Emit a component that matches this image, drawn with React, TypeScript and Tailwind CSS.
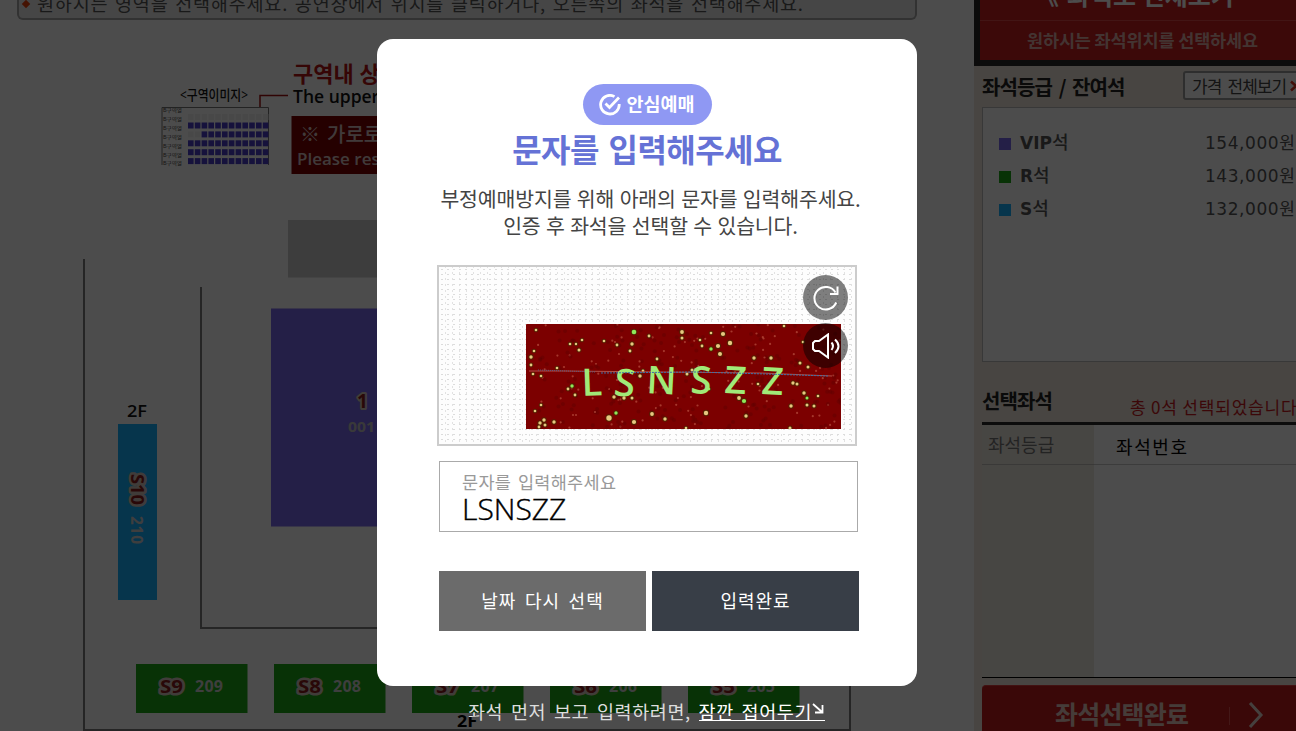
import { ReactNode } from 'react';

interface Grade {
  name: string;
  price: string;
  color: string;
}

const grades: Grade[] = [
  { name: 'VIP', price: '154,000', color: 'bg-[#7b68ee]' },
  { name: 'R', price: '143,000', color: 'bg-[#1ca814]' },
  { name: 'S', price: '132,000', color: 'bg-[#17b3ff]' },
];

const blocks = [
  { x: 136, label: 'S9', no: '209' },
  { x: 274, label: 'S8', no: '208' },
  { x: 412, label: 'S7', no: '207' },
  { x: 550, label: 'S6', no: '206' },
  { x: 688, label: 'S5', no: '205' },
];

const letters = [
  { char: 'L', x: 56, y: 72, rotate: -2 },
  { char: 'S', x: 87, y: 71, rotate: 6 },
  { char: 'N', x: 120, y: 69, rotate: 3 },
  { char: 'S', x: 164, y: 69, rotate: 3 },
  { char: 'Z', x: 198, y: 69, rotate: 3 },
  { char: 'Z', x: 235, y: 70, rotate: 3 },
];

// bright specks: x, y, radius
const specks = [
  [10, 6, 1.6], [44, 20, 1.6], [50, 20, 1.5], [56, 16, 1.6], [53, 26, 1.8], [78, 17, 1.6],
  [91, 21, 1.7], [106, 20, 2], [104, 27, 1.7], [108, 8, 2.6], [123, 12, 1.7], [156, 8, 2.2],
  [156, 14, 1.8], [174, 16, 1.6], [176, 22, 1.7], [185, 9, 1.6], [197, 10, 2.4], [204, 19, 2.5],
  [192, 22, 2.4], [185, 25, 2], [194, 30, 2.3], [258, 2, 1.6], [277, 18, 1.6], [8, 27, 1.6],
  [5, 33, 2], [5, 41, 1.7], [7, 50, 1.6], [31, 44, 1.6], [15, 52, 1.6], [46, 62, 2],
  [42, 65, 1.7], [49, 71, 1.7], [15, 81, 1.6], [9, 87, 1.6], [18, 96, 2], [28, 98, 2],
  [14, 99, 2], [19, 101, 1.8], [13, 103, 1.7], [90, 89, 2], [83, 94, 3], [88, 73, 2],
  [98, 74, 2], [106, 74, 1.8], [126, 90, 2.2], [108, 98, 2.4], [139, 95, 2], [180, 89, 2.5],
  [213, 74, 2.2], [218, 77, 2.4], [220, 92, 2], [232, 60, 1.6], [228, 34, 2], [131, 35, 1.7],
  [245, 34, 2], [267, 59, 2], [274, 39, 1.8], [282, 43, 1.8], [278, 69, 2], [281, 74, 1.8],
  [265, 82, 2], [281, 81, 1.8], [288, 82, 1.8], [264, 104, 1.8], [292, 72, 1.6], [114, 52, 2],
  [117, 47, 1.7], [161, 50, 1.8], [166, 46, 1.8], [183, 65, 1.6], [271, 60, 1.8], [160, 104, 1.6],
];

// dim noise under the bright specks
const noise = [...Array(330)].map((_, i) => ({
  x: (i * 73.7 + ((i * i * 13) % 47)) % 315,
  y: (i * 41.3 + ((i * i * 7) % 31)) % 105,
  pink: i % 3 === 0,
}));

const Captcha = () => (
  <svg width="315" height="105" viewBox="0 0 315 105" className="block">
    <rect width="315" height="105" fill="#7c0000" />
    {noise.map((n, i) => (
      <circle
        key={i}
        cx={n.x}
        cy={n.y}
        r={n.pink ? 1.1 : 2}
        fill={n.pink ? '#b85040' : '#5c0000'}
        opacity={n.pink ? 0.7 : 0.4}
      />
    ))}
    {specks.map(([x, y, r], i) => (
      <g key={i}>
        <circle cx={x} cy={y} r={r + 0.7} fill="#4a2800" opacity="0.8" />
        <circle cx={x} cy={y} r={r - 0.3} fill={i % 10 === 9 ? '#8fe85a' : '#e6c880'} />
      </g>
    ))}
    <path d="M3 47L40 47L235 49L306 52" stroke="#b0504a" strokeWidth="1" fill="none" />
    <path d="M12 46L70 48" stroke="#5a5a80" strokeDasharray="1 1" />
    {letters.map((l, i) => (
      <text
        key={i}
        x={l.x}
        y={l.y}
        transform={`rotate(${l.rotate} ${l.x} ${l.y})`}
        fill="#a0ea78"
        fontFamily="'Open Sans', sans-serif"
        fontWeight="600"
        fontSize="38"
      >
        {l.char}
      </text>
    ))}
    <path d="M75 49L170 48L240 50L302 52" stroke="#3c70a8" strokeWidth="1" strokeDasharray="2 1" fill="none" />
  </svg>
);

const Block = ({ label, no }: { label: string; no: string }) => (
  <>
    <text x="24" y="28.500" fontSize="18.500" fontWeight="700" fill="#8a1c1c" stroke="#d8c8c0" strokeWidth="5" strokeLinejoin="round" paintOrder="stroke" textLength="23" lengthAdjust="spacingAndGlyphs">
      {label}
    </text>
    <text x="59" y="28" fontSize="16" fontWeight="700" fill="#cfcfcf" textLength="28">
      {no}
    </text>
  </>
);

const SeatMap = () => (
  <svg width="974" height="711" viewBox="0 20 974 711" className="block font-['Open_Sans','Noto_Sans_CJK_KR',sans-serif]">
    <text x="180" y="100" fontSize="14" fontWeight="500" fill="#111" textLength="68" lengthAdjust="spacingAndGlyphs">
      &lt;구역이미지&gt;
    </text>
    <path d="M260 107V95.5H288" stroke="#a01010" strokeWidth="1.5" fill="none" />
    <path d="M162 165V107.5H268.500V165" stroke="#777" fill="none" />
    {[...Array(7)].map((_, row) => (
      <g key={row}>
        <text x="163" y={112 + row * 8.9} fontSize="5" fill="#444" textLength="19" lengthAdjust="spacingAndGlyphs">
          B구역열
        </text>
        {row > 0 &&
          [...Array(12)].map((_, col) => (
            <rect
              key={col}
              x={188 + col * 6.8}
              y={row === 1 ? 114 : 122.500 + (row - 2) * 8.9}
              width="5.600"
              height="6"
              fill={row === 1 || (row === 3 && col < 2) ? '#f2f2f2' : '#4a3fc8'}
            />
          ))}
      </g>
    ))}
    <text x="293" y="82" fontSize="22" fontWeight="700" fill="#b41414">
      구역내 상단이 무대와 가까운 쪽입니다
    </text>
    <text x="293" y="103" fontSize="17.500" fontWeight="600" fill="#111">
      The upper side
    </text>
    <rect x="291.500" y="116" width="200" height="58" fill="#7c0000" />
    <text x="300" y="142" fontSize="20" fontWeight="500" fill="#d8c4c4">
      ※
    </text>
    <text x="327" y="142" fontSize="20" fontWeight="500" fill="#d8c4c4">
      가로로
    </text>
    <text x="297" y="164.500" fontSize="17" fontWeight="600" fill="#d8c4c4">
      Please reserve
    </text>

    <rect x="288" y="220" width="350" height="57.500" fill="#ccc" />
    <path d="M84 259V730H850V259M201 287V628H736V287" stroke="#7c7c7c" strokeWidth="2" fill="none" />
    <rect x="271" y="308.500" width="390" height="218" fill="#7b68ee" />
    <text x="357" y="408" fontSize="19" fontWeight="700" fill="#8a1c1c" stroke="#d8c8c0" strokeWidth="4" strokeLinejoin="round" paintOrder="stroke">
      1
    </text>
    <text x="348" y="432" fontSize="15" fontWeight="700" fill="#c0c0c0" textLength="27" lengthAdjust="spacingAndGlyphs">
      001
    </text>

    <text x="127" y="417" fontSize="16" fontWeight="600" fill="#111" textLength="20" lengthAdjust="spacingAndGlyphs">
      2F
    </text>
    <rect x="118" y="424" width="39" height="176" fill="#17b3ff" />
    <g transform="translate(131 474) rotate(90)">
      <text fontSize="18" fontWeight="700" fill="#8a1c1c" stroke="#d8c8c0" strokeWidth="5" strokeLinejoin="round" paintOrder="stroke" textLength="31" lengthAdjust="spacingAndGlyphs">
        S10
      </text>
      <text x="42" fontSize="15.500" fontWeight="700" fill="#cfcfcf" textLength="28">
        210
      </text>
    </g>

    {blocks.map((b) => (
      <g key={b.label} transform={`translate(${b.x} 664)`}>
        <rect width="111.500" height="49" fill="#1ca814" />
        <Block label={b.label} no={b.no} />
      </g>
    ))}
    <text x="457" y="727" fontSize="16" fontWeight="700" fill="#000" textLength="20" lengthAdjust="spacingAndGlyphs">
      2F
    </text>
  </svg>
);

const Sidebar = () => (
  <aside className="flex h-[731px] w-[342px] shrink-0 flex-col bg-[#f0e8dc]">
    <div className="h-[66px] shrink-0 border-b-[6px] border-l-[6px] border-[#282828] bg-[#c81e1e] text-center">
      <div className="flex h-[21px] w-[320px] items-end gap-2 border-b border-[#dc4646] pl-[54px] text-[25px] leading-[34px] font-bold text-white">
        <span className="mb-[9px]">《</span>
        <span className="mb-[9px] whitespace-nowrap">좌석도 전체보기</span>
      </div>
      <p className="pl-[47px] text-left text-[17.5px] leading-[38px] font-bold tracking-[-0.15px] whitespace-nowrap text-[#e0b0a8]">
        원하시는 좌석위치를 선택하세요
      </p>
    </div>
    <div className="flex h-[41px] shrink-0 items-center pl-2">
      <h2 className="w-[201px] text-[20px] leading-5 font-bold tracking-[-0.9px] whitespace-nowrap text-[#222] [word-spacing:3px]">
        좌석등급 / 잔여석
      </h2>
      <div className="-mt-0.5 flex h-[29px] w-[125px] items-center rounded-[3px] border-2 border-[#999] bg-white pl-[7px] text-[17px] tracking-[-0.9px] whitespace-nowrap text-[#444] [word-spacing:3px]">
        가격 전체보기
        <svg width="8" height="12" viewBox="0 0 8 12" fill="none" stroke="#e03020" strokeWidth="2.5" className="ml-1 shrink-0">
          <path d="M1 1.500L6 6L1 10.500" />
        </svg>
      </div>
    </div>
    <ul className="ml-2 h-[255px] shrink-0 border border-[#bbb] bg-white pt-[19px] pl-4">
      {grades.map((g) => (
        <li key={g.name} className="flex h-[33px] items-center text-[17px] text-[#555]">
          <span className={`mr-[9px] size-3 ${g.color}`} />
          <span className="w-[185px] font-['DejaVu_Sans','Noto_Sans_CJK_KR',sans-serif] font-bold">
            {g.name}
            <span className="font-['Noto_Sans_CJK_KR',sans-serif] text-[18px] leading-none font-medium">석</span>
          </span>
          <span className="font-['DejaVu_Sans','Noto_Sans_CJK_KR',sans-serif] tracking-[0.55px] whitespace-nowrap">{g.price}원</span>
        </li>
      ))}
    </ul>
    <div className="ml-2 flex h-[63px] shrink-0 items-end justify-between border-b-[3px] border-[#282828] whitespace-nowrap">
      <h2 className="mb-[9px] text-[20px] leading-6 font-bold tracking-[-0.9px] text-[#222]">선택좌석</h2>
      <p className="mr-[5px] mb-[3px] w-[181px] text-[17px] leading-6 tracking-[0.8px] text-[#c8191e]">총 0석 선택되었습니다.</p>
    </div>
    <div className="ml-2 flex h-[253px] shrink-0 border-b border-black">
      <div className="w-28 bg-[#efe9e1]">
        <div className="h-10 border-b border-[#c4c0bc] pl-1.5 text-[18px] leading-[38px] text-[#777]">좌석등급</div>
      </div>
      <div className="flex-1 bg-white">
        <div className="h-10 border-b border-[#c8c8c8] pl-[22px] text-[18px] leading-[42px] tracking-[1.6px] text-black">좌석번호</div>
      </div>
    </div>
    <div className="mt-[7px] ml-2 flex h-[60px] shrink-0 items-center rounded-tl border-t border-[#dc3c3c] bg-[#c41c1c] pl-[73px]">
      <span className="-mt-1 text-[25px] leading-none font-bold tracking-[-0.8px] text-[#e8c8c0]">좌석선택완료</span>
      <span className="ml-[41px] h-[18px] w-px bg-[#e05050]" />
      <svg width="16" height="28" viewBox="0 0 16 28" fill="none" stroke="#e8d8d0" strokeWidth="3" className="-mt-0.5 ml-[18px]">
        <path d="M2 2L13 14L2 26" />
      </svg>
    </div>
  </aside>
);

const RoundButton = ({ children }: { children: ReactNode }) => (
  <button className="flex size-[45px] items-center justify-center rounded-full bg-black/50 text-white">{children}</button>
);

const CaptchaModal = () => (
  <div className="flex h-[647px] w-[540px] flex-col items-center rounded-2xl bg-white pt-[45px]">
    <div className="flex h-[41px] w-[129px] items-center gap-1.5 rounded-full bg-[#8f98f3] pl-4 text-white">
      <svg width="22" height="22" viewBox="0 0 22 22" fill="none" stroke="currentColor" strokeWidth="2.800">
        <path d="M15.500 2.600A9.300 9.300 0 1 0 20.200 10" />
        <path d="M6.500 9.500L10.500 13.500L20 3.500" />
      </svg>
      <span className="-mt-[3px] text-[18.5px] leading-none font-bold whitespace-nowrap">안심예매</span>
    </div>
    <h1 className="mt-1 text-[32px] leading-[38px] font-bold tracking-[-0.55px] whitespace-nowrap text-[#6572d6] [word-spacing:3px]">
      문자를 입력해주세요
    </h1>
    <p className="mt-[18px] ml-[7px] text-center text-[20.5px] leading-[27px] tracking-[-0.15px] whitespace-nowrap text-[#444] [word-spacing:1px]">
      부정예매방지를 위해 아래의 문자를 입력해주세요.
      <br />
      인증 후 좌석을 선택할 수 있습니다.
    </p>

    <div className="relative mt-[26px] h-[181px] w-[420px] border-2 border-[#ccc] bg-[#fdfdfd] bg-[radial-gradient(#dcdcdc_0.7px,transparent_1.1px),radial-gradient(#e2e2e2_0.7px,transparent_1.1px)] bg-[size:6px_5px,7px_6px] bg-[position:0_0,3px_3px] pt-[57px] pl-[87px]">
      <Captcha />
      <div className="absolute top-2 right-[7px] flex flex-col gap-[3px]">
        <RoundButton>
          <svg width="26" height="26" viewBox="0 0 26 26" fill="none" stroke="currentColor" strokeWidth="2">
            <path d="M23.200 17.500A11.300 11.300 0 1 1 22.500 7.500" />
            <path d="M24.500 1.500V9H17" />
          </svg>
        </RoundButton>
        <RoundButton>
          <svg width="30" height="26" viewBox="0 0 30 26" fill="none" stroke="currentColor" strokeWidth="2" className="shrink-0">
            <path d="M17 1.500V24.500L8 18H4L2 16V10L4 8H8Z" />
            <path d="M20.500 9.500Q23.500 13 20.500 17M24 6.500Q31 13 24 20" />
          </svg>
        </RoundButton>
      </div>
    </div>

    <div className="mt-[15px] ml-[3px] h-[71px] w-[419px] border border-[#aaa] pt-[10px] pl-[22px]">
      <div className="text-[17.5px] leading-[20px] tracking-[0.3px] text-[#999] [word-spacing:2.5px]">문자를 입력해주세요</div>
      <div className="font-['Open_Sans',sans-serif] text-[30px] leading-[34px] font-light text-black [-webkit-text-stroke:0.4px_black]">
        LSNSZZ
      </div>
    </div>

    <div className="mt-[39px] ml-1 flex gap-1.5 text-[18px] leading-[58px] tracking-[1px] text-white [word-spacing:3.5px]">
      <button className="h-[60px] w-[207px] bg-[#6b6b6b] pb-0.5 [word-spacing:3.5px]">날짜 다시 선택</button>
      <button className="h-[60px] w-[207px] bg-[#383e47] pb-0.5">입력완료</button>
    </div>
  </div>
);

const App = () => {
  return (
    <div className="relative h-[731px] w-[1296px] overflow-hidden bg-white font-['Noto_Sans_CJK_KR',sans-serif]">
      <div className="flex">
        <main className="w-[974px] shrink-0">
          <div className="ml-[17px] flex h-5 w-[900px] items-end rounded-b-md border-2 border-t-0 border-[#a8a8a8] bg-[#ebebeb] pl-1">
            <span className="mr-2 mb-[11px] size-1.5 rotate-45 bg-[#e8400a]" />
            <span className="mb-[3px] text-[18.5px] leading-6 tracking-[0.8px] whitespace-nowrap text-[#555] [word-spacing:1.8px]">
              원하시는 영역을 선택해주세요. 공연장에서 위치를 클릭하거나, 오른쪽의 좌석을 선택해주세요.
            </span>
          </div>
          <SeatMap />
        </main>
        <Sidebar />
      </div>

      <div className="absolute inset-0 flex flex-col items-start bg-black/70 pt-[39px] pl-[377px]">
        <CaptchaModal />
        <p className="mt-[13px] ml-[91px] text-[18.5px] leading-6 tracking-[0.6px] whitespace-nowrap text-[#ddd] [word-spacing:3px]">
          좌석 먼저 보고 입력하려면,{' '}
          <a className="inline-flex h-[22px] items-start border-b border-white text-white">
            잠깐 접어두기
            <svg width="13" height="13" viewBox="0 0 13 13" fill="none" stroke="currentColor" strokeWidth="1.800" className="mt-1">
              <path d="M1 1L10 9M10.500 2V9.500H3" />
            </svg>
          </a>
        </p>
      </div>
    </div>
  );
};

export default App;
